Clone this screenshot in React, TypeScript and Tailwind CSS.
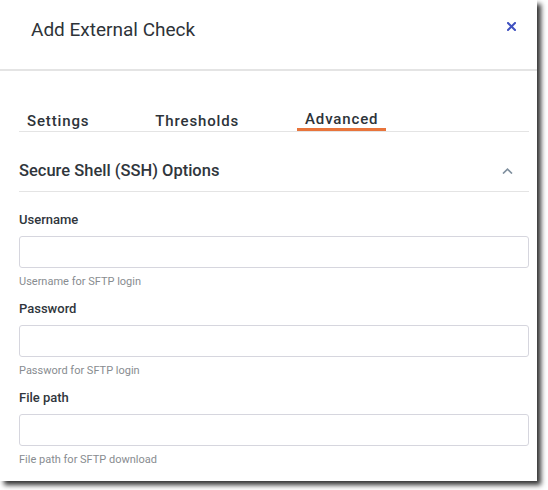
const fields = [
  { label: 'Username', help: 'Username for SFTP login' },
  { label: 'Password', help: 'Password for SFTP login' },
  { label: 'File path', help: 'File path for SFTP download' },
]

const tabs = [
  { name: 'Settings', active: false },
  { name: 'Thresholds', active: false },
  { name: 'Advanced', active: true },
]

export default function App() {
  return (
    <div className="min-h-screen bg-white font-['Roboto',sans-serif]">
      <div className="w-[537px] h-[481px] bg-white shadow-[4px_4px_5px_rgba(0,0,0,0.8)]">
        {/* header */}
        <div className="h-[71px] flex justify-between border-b-2 border-[#e4e4e4] pl-[31px] pr-[21px]">
          <h1 className="pt-[18px] text-[19px] leading-[24px] text-[#2e3338]">Add External Check</h1>
          <button className="mt-[22px] w-[9px] h-[9px] text-[#3f51c0]">
            <svg viewBox="0 0 9 9" width="9" height="9" stroke="currentColor" strokeWidth="2" strokeLinecap="square">
              <path d="M1 1 L8 8 M8 1 L1 8" />
            </svg>
          </button>
        </div>

        <div className="pl-[19px] pr-[8px]">
          {/* tabs */}
          <div className="h-[61px] flex items-end gap-[50px] border-b border-[#e4e4e4]">
            {tabs.map((tab) =>
              tab.active ? (
                <div
                  key={tab.name}
                  className="px-2 border-b-[3px] border-[#e8743b] text-[15px] leading-[18px] font-medium tracking-[0.85px] text-[#2d3339]"
                >
                  {tab.name}
                </div>
              ) : (
                <div
                  key={tab.name}
                  className="px-2 pb-[1px] text-[15px] leading-[18px] font-medium tracking-[0.85px] text-[#2d3339]"
                >
                  {tab.name}
                </div>
              )
            )}
          </div>

          {/* section header */}
          <div className="flex items-center justify-between pt-[27px] pb-[8px] border-b border-[#e4e4e4]">
            <h2 className="text-[16.5px] leading-[24px] font-medium text-[#30363c]">Secure Shell (SSH) Options</h2>
            <svg className="mr-[16px]" viewBox="0 0 11 6" width="11" height="6" fill="none" stroke="#7f8f9e" strokeWidth="1.7">
              <path d="M1 5.5 L5.5 1.2 L10 5.5" />
            </svg>
          </div>

          {/* fields */}
          <div className="pt-[20px] flex flex-col gap-[12px]">
            {fields.map((f) => (
              <div key={f.label} className="flex flex-col">
                <label className="text-[13px] leading-[16px] font-medium text-[#30363c] mb-[8px]">{f.label}</label>
                <input
                  type={f.label === 'Password' ? 'password' : 'text'}
                  className="h-[32px] w-full rounded-[3px] border border-[#d6d6de] bg-white px-2 text-[13px] outline-none"
                />
                <p className="mt-[7px] text-[11px] leading-[14px] text-[#888c90]">{f.help}</p>
              </div>
            ))}
          </div>
        </div>
      </div>
    </div>
  )
}
